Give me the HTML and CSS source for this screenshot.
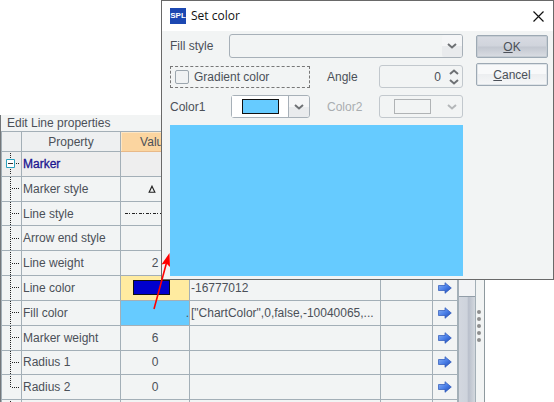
FILE: index.html
```html
<!DOCTYPE html>
<html lang="en">
<head>
<meta charset="utf-8">
<title>Set color</title>
<link rel="stylesheet" href="styles.css">
</head>
<body>
<svg class="defs" aria-hidden="true">
  <defs>
    <linearGradient id="blue" x1="0" y1="0" x2="1" y2="1">
      <stop offset="0" stop-color="#8db4f4"/>
      <stop offset="0.5" stop-color="#4a7fe8"/>
      <stop offset="1" stop-color="#1d46ae"/>
    </linearGradient>
    <symbol id="go" viewBox="0 0 14 12"><path d="M.5 3.5H7V.7L13.3 6 7 11.3V8.5H.5z" fill="url(#blue)" stroke="#2a55b8" stroke-width=".7"/></symbol>
    <symbol id="down" viewBox="0 0 10 6"><path d="M1 1l4 3.5L9 1" fill="none" stroke="currentColor" stroke-width="2"/></symbol>
    <symbol id="up" viewBox="0 0 10 6"><path d="M1 5l4-3.5L9 5" fill="none" stroke="currentColor" stroke-width="2"/></symbol>
    <symbol id="branch" viewBox="0 0 18 23"><path d="M8.500 0V23M10 11.500H18" fill="none" stroke="#222" stroke-dasharray="1 1"/></symbol>
    <symbol id="branch-end" viewBox="0 0 18 23"><path d="M8.500 0V12M10 11.500H18" fill="none" stroke="#222" stroke-dasharray="1 1"/></symbol>
  </defs>
</svg>

<main class="panel">
  <section class="properties">
    <h1 class="panel-title">Edit Line properties</h1>
    <table class="grid">
      <colgroup><col class="c-tree"><col class="c-name"><col class="c-value"><col><col class="c-extra"><col class="c-go"></colgroup>
      <thead><tr><th></th><th>Property</th><th class="active">Value</th><th></th><th></th><th></th></tr></thead>
      <tbody>
        <tr class="group"><td><svg class="tree" viewBox="0 0 18 23"><path d="M8.500 1V7M8.500 17V23M14 11.500H18" stroke="#222" stroke-dasharray="1 1"/><path d="M4.500 7.500h8v8h-8z" fill="#fff" stroke="#2aa0bd"/><path d="M6 11.500h5" stroke="#333"/></svg></td><td class="name">Marker</td><td></td><td></td><td></td><td></td></tr>
        <tr><td><svg class="tree"><use href="#branch"/></svg></td><td class="name">Marker style</td><td class="value"><svg class="marker" viewBox="0 0 7 7"><path d="M3.500 1L6 6.300H1z" fill="none" stroke="#222"/></svg></td><td></td><td></td><td></td></tr>
        <tr><td><svg class="tree"><use href="#branch"/></svg></td><td class="name">Line style</td><td class="value"><svg class="dash" viewBox="0 0 60 2"><path d="M0 .5h60" stroke="#222" stroke-dasharray="3 1 1 2"/></svg></td><td></td><td></td><td></td></tr>
        <tr><td><svg class="tree"><use href="#branch"/></svg></td><td class="name">Arrow end style</td><td></td><td></td><td></td><td></td></tr>
        <tr><td><svg class="tree"><use href="#branch"/></svg></td><td class="name">Line weight</td><td class="value">2</td><td></td><td></td><td></td></tr>
        <tr><td><svg class="tree"><use href="#branch"/></svg></td><td class="name">Line color</td><td class="value selected"><span class="swatch navy"></span></td><td class="expr">-16777012</td><td></td><td class="value"><svg class="go"><use href="#go"/></svg></td></tr>
        <tr><td><svg class="tree"><use href="#branch"/></svg></td><td class="name">Fill color</td><td class="sky more">.</td><td class="expr">["ChartColor",0,false,-10040065,...</td><td></td><td class="value"><svg class="go"><use href="#go"/></svg></td></tr>
        <tr><td><svg class="tree"><use href="#branch"/></svg></td><td class="name">Marker weight</td><td class="value">6</td><td></td><td></td><td class="value"><svg class="go"><use href="#go"/></svg></td></tr>
        <tr><td><svg class="tree"><use href="#branch"/></svg></td><td class="name">Radius 1</td><td class="value">0</td><td></td><td></td><td class="value"><svg class="go"><use href="#go"/></svg></td></tr>
        <tr><td><svg class="tree"><use href="#branch-end"/></svg></td><td class="name">Radius 2</td><td class="value">0</td><td></td><td></td><td class="value"><svg class="go"><use href="#go"/></svg></td></tr>
        <tr><td><svg class="tree"><use href="#branch"/></svg></td><td></td><td></td><td></td><td></td><td></td></tr>
      </tbody>
    </table>
  </section>
  <div class="scrollbar"><div class="thumb"></div></div>
  <div class="splitter"><i></i><i></i><i></i><i></i><i></i></div>
</main>

<section class="dialog" role="dialog" aria-labelledby="dialog-title">
  <header class="titlebar">
    <span class="logo">SPL</span>
    <h2 id="dialog-title">Set color</h2>
    <button class="close" type="button" aria-label="Close"><svg viewBox="0 0 11 11"><path d="M.5.5l10 10M10.500.5l-10 10" stroke="#111" stroke-width="1.200"/></svg></button>
  </header>
  <form class="content">
    <div class="fields">
      <div class="row fill-row">
        <label for="fill">Fill style</label>
        <span class="control"><select id="fill"><option></option></select><span class="drop"><svg><use href="#down"/></svg></span></span>
      </div>
      <div class="row">
        <label class="check"><input type="checkbox">Gradient color</label>
        <label class="second" for="angle">Angle</label>
        <span class="control small"><input id="angle" type="number" value="0"><span class="spin"><svg><use href="#up"/></svg><svg><use href="#down"/></svg></span></span>
      </div>
      <div class="row">
        <label class="first" for="color1">Color1</label>
        <span class="control color"><select id="color1"><option></option></select><span class="well"><span class="swatch sky"></span></span><span class="drop"><svg><use href="#down"/></svg></span></span>
        <label class="second off" for="color2">Color2</label>
        <span class="control small off"><select id="color2" disabled><option></option></select><span class="well plain"><span class="swatch"></span></span><span class="drop plain"><svg><use href="#down"/></svg></span></span>
      </div>
      <div class="preview sky"></div>
    </div>
    <div class="actions">
      <button class="primary" type="button"><u>O</u>K</button>
      <button type="button"><u>C</u>ancel</button>
    </div>
  </form>
</section>

<svg class="pointer" viewBox="0 0 24 60" aria-hidden="true"><path d="M4 57L17 9" stroke="red" stroke-width="1.600"/><path d="M19.500 1L20 15 16.500 11.500 11.500 12.500z" fill="red"/></svg>
</body>
</html>
```

FILE: styles.css
```css
* {
  box-sizing: border-box;
}

body {
  margin: 0;
  height: 100vh;
  overflow: hidden;
  display: flex;
  padding-top: 115px;
  background: #fff;
  color: #4b5058;
  font: 12px/16px "Liberation Sans", Arial, sans-serif;
}

svg {
  display: block;
}

.defs {
  position: absolute;
  width: 0;
  height: 0;
}

.panel {
  flex: 1;
  display: flex;
  margin-right: 69px;
  overflow: hidden;
  background: #f2f4f4;
  border-left: 1px solid #73777a;
  border-right: 1px solid #8e999e;
}

.properties {
  flex: 1;
}

.panel-title {
  margin: 0;
  padding-left: 6px;
  font: inherit;
}

.grid {
  width: 100%;
  height: 294px;
  table-layout: fixed;
  border-collapse: separate;
  border-spacing: 0;
  border: solid #a3afb7;
  border-width: 1px 0 0 1px;
}

.c-tree { width: 20px; }
.c-name { width: 99px; }
.c-value { width: 69px; }
.c-extra { width: 52px; }
.c-go { width: 25px; }

.grid th,
.grid td {
  padding: 0;
  border: solid #a3afb7;
  border-width: 0 1px 1px 0;
  overflow: hidden;
  white-space: nowrap;
}

.grid th {
  height: 20px;
  font-weight: normal;
  background: #eef0f1;
}

.grid th.active {
  background: #fbd5a0;
  border-color: #e8b988;
  box-shadow: inset 1px 1px #fde6c4;
}

.group td {
  background: #eeeeee;
}

.group .name {
  color: #1b1590;
  -webkit-text-stroke: 0.3px #1b1590;
}

.grid .name,
.grid .expr {
  padding-left: 1px;
}

.grid .value {
  text-align: center;
}

.grid .selected {
  background: #ffeba0;
}

.grid .more {
  text-align: right;
}

.sky {
  background: #66cbff;
}

.tree {
  width: 18px;
  height: 23px;
}

.marker {
  width: 8px;
  height: 8px;
  margin-left: 27px;
}

.dash {
  width: 60px;
  height: 2px;
  margin: auto;
}

.go {
  width: 14px;
  height: 12px;
  margin: auto;
}

.swatch {
  display: block;
  width: 37px;
  height: 15px;
  border: 1px solid #111;
}

.navy {
  margin-left: 12px;
  background: #0000cd;
}

.scrollbar {
  width: 18px;
  border-right: 1px solid #a3afb7;
  border-left: 1px solid #a3afb7;
  background: linear-gradient(90deg, #d3d7df, #ced3dc 50%, #b9bfcb 60%, #d3d8de);
}

.thumb {
  height: 182px;
  background: #f2f3f5;
  border-bottom: 1px solid #929da8;
}

.splitter {
  width: 8px;
  display: flex;
  flex-direction: column;
  gap: 3px;
  padding: 195px 2px 0 1px;
}

.splitter i {
  width: 4px;
  height: 4px;
  border-radius: 50%;
  background: #8e8e8e;
}

.dialog {
  position: absolute;
  top: 0;
  left: 161px;
  right: 0;
  background: #f2f4f4;
  border: 1px solid #696969;
}

.titlebar {
  display: flex;
  align-items: center;
  height: 30px;
  padding: 0 9px 0 8px;
  background: #fff;
  color: #111;
}

.titlebar h2 {
  flex: 1;
  margin: 0 0 0 5px;
  font: 12px/16px "Open Sans", sans-serif;
}

.logo {
  width: 16px;
  background: #1c48b2;
  color: #fff;
  font: bold 8px/16px "Liberation Sans", sans-serif;
  text-align: center;
}

.close {
  width: 11px;
  height: 11px;
  padding: 0;
  border: 0;
  background: none;
}

.content {
  display: flex;
  gap: 13px;
  padding: 3px 5px 3px 8px;
}

.fields {
  flex: 1;
  display: flex;
  flex-direction: column;
  gap: 7px;
}

.row {
  display: flex;
  align-items: center;
  height: 23px;
}

.fill-row {
  height: 24px;
}

.fill-row label {
  width: 59px;
}

.first {
  width: 61px;
}

.second {
  flex: 1;
  padding-left: 17px;
}

.off {
  color: #a9adb0;
}

.check {
  display: flex;
  align-items: center;
  gap: 5px;
  width: 140px;
  height: 22px;
  padding-left: 4px;
  border: 1px dashed #777;
}

.check input {
  appearance: none;
  width: 14px;
  height: 14px;
  margin: 0;
  border: 1px solid #9ca6ae;
  border-radius: 2px;
  background: #f0f2f3;
}

.control {
  position: relative;
  flex: 1;
  height: 100%;
  color: #6e7174;
}

.control.small {
  flex: none;
  width: 84px;
}

.control.color {
  flex: none;
  width: 79px;
}

.control.off {
  color: #b4b7b9;
}

.control select,
.control input {
  appearance: none;
  display: block;
  width: 100%;
  height: 100%;
  margin: 0;
  padding: 0 21px 0 4px;
  border: 1px solid #a7b0b8;
  border-radius: 3px;
  background: #f2f4f4;
  color: #4b5058;
  font: inherit;
  opacity: 1;
}

.control input {
  text-align: right;
}

.control input::-webkit-inner-spin-button {
  appearance: none;
  display: none;
}

.control.small select,
.control.small input {
  border-color: #c2c8cd;
}

.drop,
.spin,
.well {
  position: absolute;
  top: 1px;
  bottom: 1px;
  pointer-events: none;
}

.drop {
  right: 1px;
  width: 20px;
  display: grid;
  place-items: center;
  border-radius: 2px;
  background: linear-gradient(#f5f6f7 50%, #e9ebed 50%);
}

.drop svg,
.spin svg {
  width: 10px;
  height: 6px;
}

.spin {
  right: 4px;
  display: flex;
  flex-direction: column;
  justify-content: space-between;
  padding: 3px 0 2px;
}

.well {
  left: 1px;
  width: 57px;
  display: grid;
  place-items: center;
  background: #fff;
  border-right: 1px solid #a7b0b8;
}

.well.plain {
  width: 64px;
  border: 0;
}

.plain {
  background: none;
}

.plain .swatch {
  border-color: #b0b3b5;
}

.preview {
  height: 151px;
}

.actions {
  width: 72px;
  display: flex;
  flex-direction: column;
  gap: 5px;
  padding-top: 1px;
}

.actions button {
  height: 23px;
  padding: 0;
  border: 1px solid #9da9b4;
  border-radius: 2px;
  background: linear-gradient(#f8f9fa 50%, #eceef0 50%, #f6f7f8);
  box-shadow: inset 0 0 0 1px #dfe4e8;
  color: #4b5058;
  font: inherit;
}

.actions .primary {
  background: linear-gradient(#d8dbe2, #d0d4dc 48%, #c2c7d0 52%, #dadde3);
  box-shadow: inset 0 0 0 1px #c5ccd3;
}

.pointer {
  position: absolute;
  left: 150px;
  top: 252px;
  width: 24px;
  height: 60px;
}
```
